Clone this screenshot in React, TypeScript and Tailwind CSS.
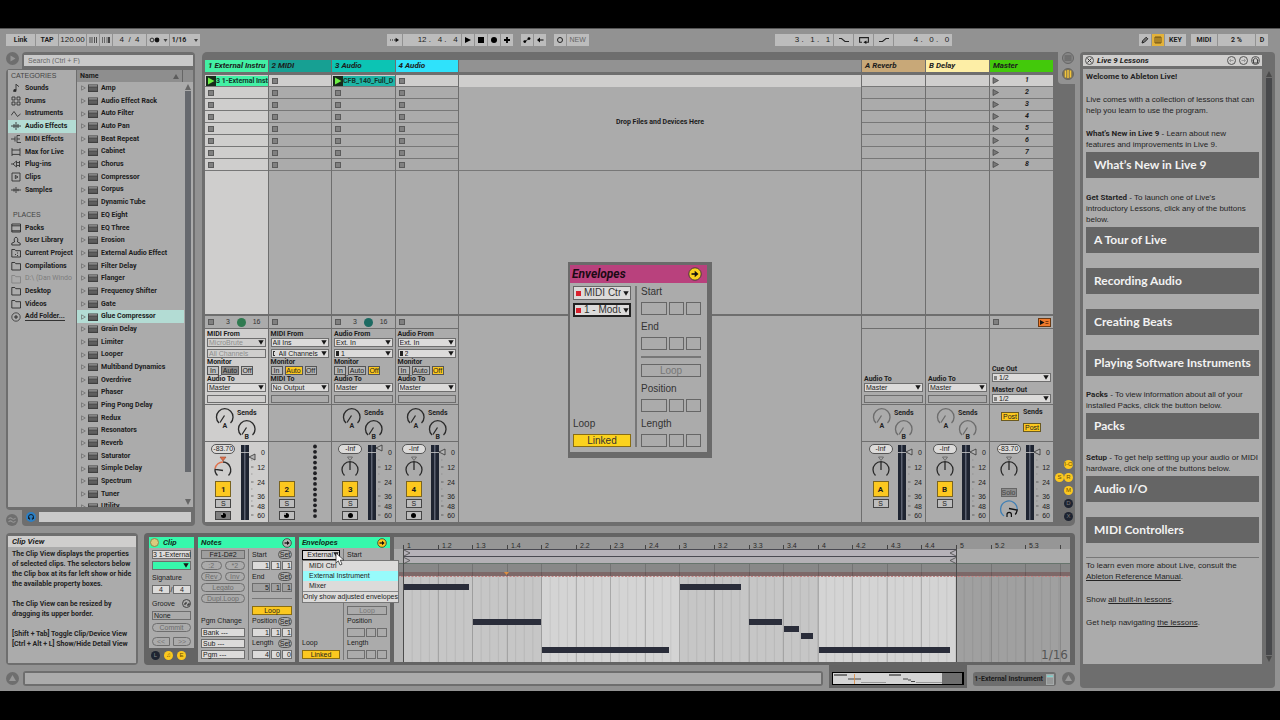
import React, { useState } from "react";
import type { ReactNode } from "react";

const BOLD = "font-['Roboto','Liberation_Sans',sans-serif] font-bold";

/* ---------- shared pieces ---------- */

function Tri({ className = "" }: { className?: string }) {
  return (
    <svg viewBox="0 0 6 5" className={`h-[5px] w-[6px] ${className}`} aria-hidden="true">
      <path d="M0.3 0.3h5.4L3 4.8z" fill="#161616" />
    </svg>
  );
}

function Choice({
  label,
  value,
  dim = false,
  mark = "none",
}: {
  label: string;
  value: string;
  dim?: boolean;
  mark?: "none" | "bar" | "block" | "square";
}) {
  const pad = mark === "none" ? "pl-px" : mark === "bar" ? "pl-[7px]" : "pl-[6px]";
  return (
    <div className="relative h-[9px] w-full">
      <select
        aria-label={label}
        className={`block h-[9px] w-full appearance-none border border-[#6e6e6e] p-0 text-[7px] leading-[7px] ${pad} ${
          dim ? "bg-[#cfcecd] text-[#8e8e8e]" : "bg-[#dcdbda] text-[#1c1c1c]"
        }`}
      >
        <option>{value}</option>
      </select>
      {mark === "bar" && <span className="absolute top-[2px] left-[2px] h-[5px] w-[2px] border border-r-0 border-[#333]" />}
      {mark === "block" && <span className="absolute top-[2px] left-[2px] h-[5px] w-[3px] bg-[#222]" />}
      {mark === "square" && <span className="absolute top-[3px] left-[2px] h-[4px] w-[3px] bg-[#808080]" />}
      {(!dim || value === "MicroBrute") && <Tri className="pointer-events-none absolute top-[2px] right-[2px]" />}
    </div>
  );
}

function IoLabel({ children }: { children: ReactNode }) {
  return <div className={`h-2 text-[7px] leading-[8px] whitespace-nowrap ${BOLD}`}>{children}</div>;
}

function StopSquare() {
  return <button aria-label="Stop clip" className="block h-[6px] w-[6px] border border-[#5b5b5b] bg-[#808080]" />;
}

/* ---------- top bar ---------- */

function Cell({ children, label, className = "" }: { children: ReactNode; label?: string; className?: string }) {
  return (
    <button
      aria-label={label}
      className={`flex h-3 items-center justify-center text-[7px] leading-[12px] whitespace-pre ${
        className.includes("bg-") ? "" : "bg-[#bcbcbc]"
      } ${className}`}
    >
      {children}
    </button>
  );
}

function TopBar() {
  return (
    <header className="flex h-[23px] justify-between pt-[5px] pr-3 pl-[6px]">
      <div className="flex gap-px">
        <Cell className={`w-[29px] ${BOLD}`}>Link</Cell>
        <Cell className={`w-[22px] ${BOLD}`}>TAP</Cell>
        <Cell className="w-[27px] text-[8px]">120.00</Cell>
        <Cell label="Nudge down" className="w-3">
          <svg viewBox="0 0 8 6" className="h-[6px] w-2">
            <path d="M1 0v6M3 0v6M5.5 0v6M7.5 0v6" stroke="#333" strokeWidth=".8" />
          </svg>
        </Cell>
        <Cell label="Nudge up" className="w-3">
          <svg viewBox="0 0 8 6" className="h-[6px] w-2">
            <path d="M.5 0v6M2.5 0v6M5 0v6" stroke="#444" strokeWidth=".7" />
            <path d="M7 0v6" stroke="#111" strokeWidth="1.4" />
          </svg>
        </Cell>
        <Cell className="w-[33px] text-[8px]">{"4  /  4"}</Cell>
        <Cell label="Metronome" className="w-[22px]">
          <svg viewBox="0 0 22 8" className="h-2 w-[22px]">
            <circle cx="5" cy="4" r="1.9" fill="none" stroke="#222" strokeWidth=".9" />
            <circle cx="10" cy="4" r="2.4" fill="#111" />
            <path d="M16.5 3h4l-2 3z" fill="#444" />
          </svg>
        </Cell>
        <Cell className={`w-[30px] gap-2 ${BOLD}`}>
          1/16
          <svg viewBox="0 0 4 3" className="h-[3px] w-1">
            <path d="M0 0h4L2 3z" fill="#444" />
          </svg>
        </Cell>
      </div>

      <div className="flex gap-2">
        <div className="flex gap-px">
          <Cell label="Follow" className="w-[15px]">
            <svg viewBox="0 0 9 6" className="h-[6px] w-[9px]">
              <path d="M0 3h1M2 3h1M4 3h3" stroke="#222" strokeWidth="1.1" />
              <path d="M5.6 .7L9 3 5.6 5.3z" fill="#111" />
            </svg>
          </Cell>
          <Cell className="w-[58px] justify-end pr-[3px] text-[8px]">{"12 .   4 .   4"}</Cell>
          <Cell label="Play" className="w-3">
            <svg viewBox="0 0 8 8" className="h-2 w-2">
              <path d="M1 1l6 3-6 3z" />
            </svg>
          </Cell>
          <Cell label="Stop" className="w-3">
            <span className="h-[6px] w-[6px] bg-black" />
          </Cell>
          <Cell label="Record" className="w-3">
            <span className="h-[6px] w-[6px] rounded-full bg-black" />
          </Cell>
          <Cell label="Overdub" className="w-3">
            <svg viewBox="0 0 8 8" className="h-2 w-2">
              <path d="M4 1v6M1 4h6" stroke="#000" strokeWidth="1.8" />
            </svg>
          </Cell>
        </div>
        <div className="flex gap-px">
          <Cell label="Automation arm" className="w-3">
            <svg viewBox="0 0 8 8" className="h-2 w-2">
              <circle cx="1.8" cy="5.6" r="1.4" />
              <circle cx="6" cy="2.6" r="1.4" />
              <path d="M1.8 5.6L6 2.6" stroke="#000" strokeWidth=".7" />
            </svg>
          </Cell>
          <Cell label="Re-enable automation" className="w-3">
            <svg viewBox="0 0 8 8" className="h-2 w-2">
              <path d="M4 1.6L1 4l3 2.4z" />
              <path d="M3 4h4.5" stroke="#111" strokeWidth="1.1" />
            </svg>
          </Cell>
        </div>
        <div className="flex gap-px">
          <Cell label="Session record" className="w-3">
            <span className="h-[6px] w-[6px] rounded-full border border-[#222]" />
          </Cell>
          <Cell className="w-[22px] text-[#666]">NEW</Cell>
        </div>
      </div>

      <div className="flex gap-px">
        <Cell className="w-[58px] justify-end pr-[3px] text-[8px]">{"3 .   1 .   1"}</Cell>
        <Cell label="Punch in" className="w-[19px]">
          <svg viewBox="0 0 12 8" className="h-2 w-3">
            <path d="M1 2.5h2.5L7 5.5h4" fill="none" stroke="#222" strokeWidth="1.1" />
          </svg>
        </Cell>
        <Cell label="Loop" className="w-[19px]">
          <svg viewBox="0 0 12 8" className="h-2 w-3">
            <path d="M4 6.3H1.6V1.6h8.8v4.7H8" fill="none" stroke="#222" strokeWidth="1.1" />
            <path d="M8.4 4.4v3.6L5.4 6.2z" fill="#111" />
          </svg>
        </Cell>
        <Cell label="Punch out" className="w-[19px]">
          <svg viewBox="0 0 12 8" className="h-2 w-3">
            <path d="M1 5.5h3.5L8 2.5h3" fill="none" stroke="#222" strokeWidth="1.1" />
          </svg>
        </Cell>
        <Cell className="w-[58px] justify-end pr-[3px] text-[8px]">{"4 .   0 .   0"}</Cell>
      </div>

      <div className="flex gap-px">
        <Cell label="Draw mode" className="w-3">
          <svg viewBox="0 0 8 8" className="h-2 w-2">
            <path d="M1 7l.7-2.3L5.2 1.2 6.8 2.8 3.3 6.3z" fill="#777" stroke="#222" />
          </svg>
        </Cell>
        <Cell label="Computer MIDI keyboard" className="w-3 bg-[#e3b23a]">
          <svg viewBox="0 0 8 8" className="h-2 w-2">
            <path d="M1 1h6v6H1zM3 1v6M5 1v6" fill="none" stroke="#553e0c" strokeWidth=".8" />
          </svg>
        </Cell>
        <Cell className={`w-[21px] ${BOLD}`}>KEY</Cell>
        <span className="w-[3px]" />
        <Cell className={`w-[26px] ${BOLD}`}>MIDI</Cell>
        <Cell className={`w-[37px] ${BOLD}`}>2 %</Cell>
        <Cell className={`w-3 ${BOLD}`}>D</Cell>
      </div>
    </header>
  );
}

/* ---------- browser ---------- */

const CATEGORY_PATHS: Record<string, string> = {
  Sounds: "M5 1v6M5 1.3l3 2.4M3 6.6h2v1.8H2.6z",
  Drums: "M1 1h3v3H1zM6 1h3v3H6zM1 6h3v3H1zM6 6h3v3H6z",
  Instruments: "M0 6.5l3-4 3.5 5L9.5 5",
  "Audio Effects": "M0 5h10M3 3v4M5 1v8M7 3v4",
  "MIDI Effects": "M0 5h4M4 2.5v5M9 1.5H6v7h4M6 5h3",
  "Max for Live": "M1 3h8v4.4H1zM1 1.2V3M9 1.2V3M1 7.4V9M9 7.4V9",
  "Plug-ins": "M0 5h2M5.5 2L2 5l3.5 3zM6 3.5h3M6 6.5h3M8.5 2v6",
  Clips: "M1 1h8v8H1zM4.3 3.4L7 5 4.3 6.6z",
  Samples: "M0 5h10M3 3.4v3.2M5 2v6M7 3.8v2.4",
};

const PLACES = ["Packs", "User Library", "Current Project", "Compilations", "D:\\ (Dan Windo", "Desktop", "Videos"];

const DEVICES = [
  "Amp", "Audio Effect Rack", "Auto Filter", "Auto Pan", "Beat Repeat", "Cabinet", "Chorus", "Compressor", "Corpus",
  "Dynamic Tube", "EQ Eight", "EQ Three", "Erosion", "External Audio Effect", "Filter Delay", "Flanger",
  "Frequency Shifter", "Gate", "Glue Compressor", "Grain Delay", "Limiter", "Looper", "Multiband Dynamics",
  "Overdrive", "Phaser", "Ping Pong Delay", "Redux", "Resonators", "Reverb", "Saturator", "Simple Delay",
  "Spectrum", "Tuner", "Utility",
];

function placePath(name: string) {
  if (name === "Packs") return "M.8 1h8.700v8H.8zM.8 2.800h8.700M.8 7.800h8.700";
  if (name === "User Library") return "M3.500 6c-1.800-6.300 4.800-6.300 3 0l2.700 1.200V9H.8V7.200z";
  if (name === "Current Project") return "M.8 9V1.500h3l1 1.200h4.700V9zM4 6.500h1M6 5h1M6 7.500h1";
  return "M.8 9V1.500h3l1 1.200h4.700V9z";
}

function Browser() {
  const [category, setCategory] = useState("Audio Effects");
  return (
    <section aria-label="Browser" className="flex w-[189px] flex-col">
      <div className="flex">
        <div className="w-4">
          <button aria-label="Preview" className="block h-[13px] w-[13px] rounded-full bg-[#6e6e6e]">
            <svg viewBox="0 0 13 13" className="h-[13px] w-[13px]">
              <path d="M4.500 3.500v6l5-3z" fill="#969696" />
            </svg>
          </button>
        </div>
        <div className="flex-1 rounded-t-[4px] bg-[#6e6e6e] px-[2px] pt-[3px] pb-[3px]">
          <input
            aria-label="Search"
            placeholder="Search (Ctrl + F)"
            className="block h-[11px] w-full bg-[#c9c9c9] px-1 text-[7px] placeholder:text-[#666]"
          />
        </div>
      </div>

      <div className="flex h-0 min-h-0 grow gap-px rounded-tl-[4px] rounded-bl-[4px] bg-[#6e6e6e] p-[2px] pt-px pb-[3px]">
        <nav className="w-[68px] overflow-hidden bg-[#ababab]">
          <h2 className="h-3 pl-[3px] text-[7px] leading-[12px] text-[#444]">CATEGORIES</h2>
          <ul className={`grid h-[241px] grid-rows-[repeat(19,1fr)] text-[7px] text-[#1c1c1c] ${BOLD}`}>
            {Object.entries(CATEGORY_PATHS).map(([name, d]) => (
              <li key={name} className="min-h-0">
                <button
                  onClick={() => setCategory(name)}
                  className={`flex h-full w-full items-center gap-1 pl-[3px] whitespace-nowrap ${
                    category === name ? "bg-[#b3dcd4]" : ""
                  }`}
                >
                  <svg viewBox="0 0 10 10" className="h-[10px] w-[10px] shrink-0">
                    <path d={d} fill={name === "Sounds" ? "#222" : "none"} stroke="#333" strokeWidth=".9" />
                  </svg>
                  {name}
                </button>
              </li>
            ))}
            <li />
            <li className="flex items-center pl-[5px] font-['Liberation_Sans',sans-serif] font-normal text-[#444]">PLACES</li>
            {PLACES.map((name) => (
              <li key={name} className={`min-h-0 ${name.startsWith("D:") ? "font-normal text-[#7d7d7d]" : ""}`}>
                <button className="flex h-full w-full items-center gap-1 pl-[3px] whitespace-nowrap">
                  <svg viewBox="0 0 10 10" className="h-[10px] w-[10px] shrink-0">
                    <path d={placePath(name)} fill="none" stroke="currentColor" strokeWidth=".8" />
                  </svg>
                  {name}
                </button>
              </li>
            ))}
            <li className="min-h-0">
              <button className="flex h-full w-full items-center gap-1 pl-[3px] whitespace-nowrap">
                <svg viewBox="0 0 10 10" className="h-[10px] w-[10px] shrink-0">
                  <circle cx="5" cy="5" r="4.200" fill="none" stroke="#333" strokeWidth=".8" />
                  <path d="M5 3v4M3 5h4" stroke="#222" strokeWidth=".9" />
                </svg>
                <span className="border-b border-[#333] leading-[8px]">Add Folder...</span>
              </button>
            </li>
          </ul>
        </nav>

        <div className="flex min-w-0 flex-1 flex-col overflow-hidden bg-[#ababab]">
          <div className={`flex h-3 shrink-0 items-center bg-[#8e8e8e] pl-[3px] text-[7px] ${BOLD}`}>
            <span className="flex-1">Name</span>
            <svg viewBox="0 0 6 5" className="mr-[3px] h-[5px] w-[6px]">
              <path d="M3 0l3 5H0z" fill="#5c5c5c" />
            </svg>
            <span className="h-3 w-[11px] border-l border-[#666]" />
          </div>
          <div className="flex min-h-0 flex-1">
            <ul className={`grid h-[431px] flex-1 grid-rows-[repeat(34,1fr)] text-[7px] text-[#1c1c1c] ${BOLD}`}>
              {DEVICES.map((name) => (
                <li
                  key={name}
                  className={`flex min-h-0 items-center pl-1 whitespace-nowrap ${name === "Glue Compressor" ? "bg-[#b3dcd4]" : ""}`}
                >
                  <svg viewBox="0 0 5 6" className="h-[6px] w-[5px]">
                    <path d="M.5 .8L4.300 3 .5 5.200z" fill="none" stroke="#6a6a6a" strokeWidth=".7" />
                  </svg>
                  <svg viewBox="0 0 10 8" className="mr-[3px] ml-[2px] h-2 w-[10px]">
                    <path d="M0 .5h10v7.500H0z" fill="#3f3f3f" />
                    <path d="M.8 1.300h8.400v1.200H.8z" fill="#a2a2a2" />
                    <path d="M.8 3.400h8.400v3.400H.8z" fill="#5e5e5e" />
                  </svg>
                  {name}
                </li>
              ))}
            </ul>
            <div className="flex w-[9px] flex-col items-center py-[2px] pr-px">
              <svg viewBox="0 0 6 6" className="h-[6px] w-[6px]">
                <path d="M3 0l3 6H0z" fill="#666" />
              </svg>
              <div className="mt-px mb-[27px] w-[6px] flex-1 bg-[#66696e]" />
              <svg viewBox="0 0 6 6" className="h-[6px] w-[6px]">
                <path d="M3 6l3-6H0z" fill="#666" />
              </svg>
            </div>
          </div>
        </div>
      </div>

      <div className="flex">
        <div className="w-4 pt-[4px]">
          <button aria-label="Groove pool" className="block h-[12px] w-[12px] rounded-full bg-[#6e6e6e]">
            <svg viewBox="0 0 12 12" className="h-3 w-3">
              <path d="M2.500 5q1.700-2 3.500-.4t3.500-.6M2.500 8q1.700-2 3.500-.4t3.500-.6" fill="none" stroke="#969696" strokeWidth="1.100" />
            </svg>
          </button>
        </div>
        <div className="flex flex-1 items-center gap-[3px] rounded-b-[4px] bg-[#6e6e6e] pt-px pr-[4px] pb-[3px] pl-[4px]">
          <button aria-label="Preview files" className="h-[10px] w-[10px] rounded-full bg-[#2b7fc4]">
            <svg viewBox="0 0 10 10" className="h-[10px] w-[10px]">
              <path d="M2.500 7V5a2.500 2.500 0 015 0v2M3.600 5.500v2.200M6.400 5.500v2.200" fill="none" stroke="#10202e" />
            </svg>
          </button>
          <div className="h-[10px] flex-1 bg-[#c9c9c9]" />
        </div>
      </div>
    </section>
  );
}

/* ---------- mixer drawings ---------- */

function Sends({ dim = false }: { dim?: boolean }) {
  const stroke = dim ? "#6c6c6c" : "#2a2a2a";
  return (
    <svg viewBox="0 0 62 36" className="h-9 w-[62px]" aria-label="Sends A and B" role="img">
      <g fill="none" stroke={stroke} strokeWidth="1.300">
        <path d="M14 18A8.300 8.300 0 1 1 25.500 18M19.500 10.500l-4.500 7" />
        <path d="M36 30A8.300 8.300 0 1 1 47.500 30M41.500 22.500l-4.500 7" />
      </g>
      <g fill="#222" className={BOLD} fontSize="7">
        <text x="17.500" y="22.500">A</text>
        <text x="39.500" y="34">B</text>
        <text x="32" y="9.500">Sends</text>
      </g>
    </svg>
  );
}

const SCALE: [string, number][] = [["0", 10], ["12", 25], ["24", 40], ["36", 54], ["48", 64], ["60", 73]];

function Meter({ marker }: { marker: number }) {
  return (
    <svg viewBox="0 0 26 80" className="h-20 w-[26px] shrink-0" role="img" aria-label="Level meter">
      <rect x="1" y="3" width="8" height="75" fill="#5b6170" />
      <rect x="1" y="3" width="3" height="75" fill="#1e2431" />
      <rect x="5.500" y="3" width="3.500" height="75" fill="#1e2431" />
      <path d="M1 10.500h8" stroke="#ccc" strokeWidth=".8" />
      <path d={`M15 ${marker - 3}v6l-6-3z`} fill="#b5b5b5" stroke="#333" strokeWidth=".8" />
      <g stroke="#888" strokeWidth=".7">
        {SCALE.slice(1).map(([t, y]) => (
          <path key={t} d={`M11 ${y}h2.500`} stroke="#444" />
        ))}
        <path d="M11 18h1.500M11 32h1.500M11 47h1.500M11 59h1.500" />
      </g>
      <g fontSize="7" fill="#222" textAnchor="end">
        {SCALE.map(([t, y]) => (
          <text key={t} x="25" y={y + 2.500}>{t}</text>
        ))}
      </g>
    </svg>
  );
}

function PanKnob({ left = false }: { left?: boolean }) {
  return (
    <svg viewBox="0 0 22 26" className="h-[26px] w-[22px]" role="img" aria-label="Pan">
      {left ? (
        <>
          <path d="M5.500 20.500A8 8 0 0 1 3.100 13.500M11 7a8 8 0 0 1 5.500 13.500M11 15.500l-7.500-1.200" fill="none" stroke="#2a2a2a" strokeWidth="1.300" />
          <path d="M3.100 13.500A8 8 0 0 1 11 7" fill="none" stroke="#e0704a" strokeWidth="1.400" />
          <path d="M8 2h6l-3 4z" fill="#e0704a" stroke="#9a4a30" strokeWidth=".6" />
        </>
      ) : (
        <>
          <path d="M5.500 20.500A8 8 0 1 1 16.500 20.500M11 15V7" fill="none" stroke="#2a2a2a" strokeWidth="1.300" />
          <path d="M8.500 2h5L11 5.500z" fill="none" stroke="#555" strokeWidth=".7" />
        </>
      )}
    </svg>
  );
}

function Mixer({ name, level, marker, armed, dimArm = false, midi = false }: { name: string; level: string; marker: number; armed: boolean; dimArm?: boolean; midi?: boolean }) {
  return (
    <div className="flex h-20 pr-[2px]">
      <div className="flex w-9 flex-col items-center pt-[2px] pl-[2px]">
        {midi ? (
          <div className="h-[37px] shrink-0" />
        ) : (
          <>
            <div className="flex h-[10px] w-[24px] shrink-0 items-center justify-center rounded-full border border-[#555] bg-[#dcdbda] text-[7px] leading-[8px]">
              {level}
            </div>
            <div className="h-[27px] shrink-0 pt-px">
              <PanKnob left={level.startsWith("-8")} />
            </div>
          </>
        )}
        <button className={`h-4 w-4 shrink-0 border border-[#7a6420] bg-[#fcc81f] text-[8px] leading-[13px] ${BOLD}`}>{name}</button>
        <button className="mt-[2px] h-[9px] w-4 shrink-0 border border-[#444] bg-[#bdbdbd] text-[7px] leading-[7px]">S</button>
        {armed && (
          <button
            aria-label={`Arm ${name}`}
            className={`mt-[3px] flex h-[9px] w-4 shrink-0 items-center justify-center border border-[#444] ${dimArm ? "bg-[#808080]" : "bg-[#bdbdbd]"}`}
          >
            <span className="flex h-[5px] w-[5px] items-start justify-start rounded-full bg-black">
              {(midi || dimArm) && <span className="h-[2px] w-[2px] bg-[#999]" />}
            </span>
          </button>
        )}
      </div>
      {midi ? (
        <svg viewBox="0 0 26 80" className="h-20 w-[26px] shrink-0" role="img" aria-label="MIDI activity">
          {Array.from({ length: 14 }, (_, i) => (
            <circle key={i} cx="12" cy={4.5 + i * 5.35} r="1.900" fill="#1e1e22" />
          ))}
        </svg>
      ) : (
        <Meter marker={marker} />
      )}
    </div>
  );
}

/* ---------- session view ---------- */

type Track = {
  title: string;
  head: string;
  clip?: string;
  clipColor?: string;
  from: string;
  source: string;
  channel: string;
  mark: "none" | "bar" | "block";
  to: string;
  out: string;
  monitor: string;
  count: string;
  name: string;
};

const TRACKS: Track[] = [
  { title: "1 External Instru", head: "bg-[#43f0a4]", clip: "3 1-External Inst", clipColor: "bg-[#43f0a4]", from: "MIDI From", source: "MicroBrute", channel: "All Channels", mark: "none", to: "Audio To", out: "Master", monitor: "", count: "bg-[#2f7a50]", name: "1" },
  { title: "2 MIDI", head: "bg-[#17a093]", from: "MIDI From", source: "All Ins", channel: "All Channels", mark: "bar", to: "MIDI To", out: "No Output", monitor: "Auto", count: "", name: "2" },
  { title: "3 Audio", head: "bg-[#0cc4b4]", clip: "CFB_140_Full_D", clipColor: "bg-[#1fb5a6]", from: "Audio From", source: "Ext. In", channel: "1", mark: "block", to: "Audio To", out: "Master", monitor: "Off", count: "bg-[#1d6a62]", name: "3" },
  { title: "4 Audio", head: "bg-[#2fe2fb]", from: "Audio From", source: "Ext. In", channel: "2", mark: "block", to: "Audio To", out: "Master", monitor: "Off", count: "", name: "4" },
];

const ROWS = [1, 2, 3, 4, 5, 6, 7, 8];
const TITLE = `h-3 shrink-0 overflow-hidden pl-[3px] text-[8px] leading-[12px] whitespace-nowrap italic ${BOLD}`;

function TrackColumn({ track, selected }: { track: Track; selected: boolean }) {
  const base = selected ? "bg-[#cfcecd]" : "bg-[#ababab]";
  const monitorWidths: Record<string, string> = { In: "w-3", Auto: "w-[18px]", Off: "w-3" };
  return (
    <div className="flex min-w-0 flex-col">
      <div className={`${TITLE} ${track.head}`}>{track.title}</div>
      <div className="mt-[3px]">
        {ROWS.map((row) => (
          <div
            key={row}
            className={`flex h-3 items-center border-b border-[#777] ${row === 1 ? "bg-[#cfcecd]" : base} ${row === 1 && track.clip ? "pl-px" : "pl-[3px]"}`}
          >
            {row === 1 && track.clip ? (
              <div className={`flex h-[10px] w-full overflow-hidden ${track.clipColor}`}>
                <button aria-label="Launch clip" className="h-[10px] w-[10px] shrink-0 bg-[#172a1c]">
                  <svg viewBox="0 0 10 10" className="h-[10px] w-[10px]">
                    <path d="M2 1.500l6.500 3.500L2 8.500z" fill="#6df043" />
                  </svg>
                </button>
                <span className={`text-[7px] leading-[10px] whitespace-nowrap text-[#12352c] ${BOLD}`}>{track.clip}</span>
              </div>
            ) : (
              <StopSquare />
            )}
          </div>
        ))}
      </div>
      <div className={`flex-1 ${base}`} />
      <div className="mt-[2px] flex h-3 items-center bg-[#ababab] pr-[7px] pl-[3px] text-[7px] text-[#333]">
        <StopSquare />
        {track.count && (
          <>
            <span className="ml-3">3</span>
            <span className={`ml-[7px] h-[9px] w-[9px] rounded-full ${track.count}`} />
            <span className="ml-auto">16</span>
          </>
        )}
      </div>
      <div className={`mt-px flex h-[75px] flex-col px-[2px] pt-px ${base}`}>
        <IoLabel>{track.from}</IoLabel>
        <Choice label={`${track.title} input`} value={track.source} dim={selected} />
        <div className="h-[2px]" />
        <Choice label={`${track.title} input channel`} value={track.channel} dim={selected} mark={track.mark} />
        <IoLabel>Monitor</IoLabel>
        <div className="flex gap-[2px]">
          {["In", "Auto", "Off"].map((m) => (
            <button
              key={m}
              className={`h-[9px] border border-[#555] text-[7px] leading-[7px] ${monitorWidths[m]} ${
                track.monitor === m ? "bg-[#fcc81f]" : selected && m === "Auto" ? "bg-[#8c8c8c]" : selected ? "bg-[#c0c0c0]" : "bg-[#b6b6b6]"
              }`}
            >
              {m}
            </button>
          ))}
        </div>
        <IoLabel>{track.to}</IoLabel>
        <Choice label={`${track.title} output`} value={track.out} />
        <div className={`mt-[3px] h-2 border border-[#6e6e6e] ${base}`} />
      </div>
      <div className={`mt-px h-9 ${base}`}>{track.name !== "2" && <Sends />}</div>
      <div className={`mt-px ${base}`}>
        <Mixer
          name={track.name}
          level={track.name === "1" ? "-83.70" : "-Inf"}
          marker={track.name === "1" ? 15 : track.name === "3" ? 6 : 10}
          armed
          dimArm={selected}
          midi={track.name === "2"}
        />
      </div>
    </div>
  );
}

function ReturnColumn({ title, head, name }: { title: string; head: string; name: string }) {
  return (
    <div className="flex min-w-0 flex-col">
      <div className={`${TITLE} ${head}`}>{title}</div>
      <div className="mt-[3px]">
        {ROWS.map((row) => (
          <div key={row} className={`h-3 border-b border-[#777] ${row === 1 ? "bg-[#cfcecd]" : "bg-[#ababab]"}`} />
        ))}
      </div>
      <div className="flex-1 bg-[#ababab]" />
      <div className="mt-[2px] h-3 bg-[#ababab]" />
      <div className="mt-px flex h-[75px] flex-col justify-end bg-[#ababab] px-[2px] pb-px">
        <IoLabel>Audio To</IoLabel>
        <Choice label={`${title} output`} value="Master" />
        <div className="mt-[3px] h-2 border border-[#6e6e6e]" />
      </div>
      <div className="mt-px h-9 bg-[#ababab]">
        <Sends dim />
      </div>
      <div className="mt-px bg-[#ababab]">
        <Mixer name={name} level="-Inf" marker={10} armed={false} />
      </div>
    </div>
  );
}

function MasterColumn() {
  return (
    <div className="flex w-[63px] flex-col">
      <div className={`${TITLE} bg-[#43c90b]`}>Master</div>
      <div className="mt-[3px]">
        {ROWS.map((row) => (
          <div key={row} className={`flex h-3 items-center border-b border-[#777] pl-[2px] ${row === 1 ? "bg-[#cfcecd]" : "bg-[#ababab]"}`}>
            <button aria-label={`Launch scene ${row}`} className="w-[7px]">
              <svg viewBox="0 0 7 7" className="h-[7px] w-[7px]">
                <path d="M1 .5l5.500 3L1 6.500z" fill="#777" stroke="#444" strokeWidth=".7" />
              </svg>
            </button>
            <span className={`ml-[26px] text-[7px] italic ${BOLD}`}>{row}</span>
          </div>
        ))}
      </div>
      <div className="flex-1 bg-[#ababab]" />
      <div className="mt-[2px] flex h-3 items-center justify-between bg-[#ababab] pr-[2px] pl-[3px]">
        <StopSquare />
        <button aria-label="Back to arrangement" className="h-[9px] w-[13px] border border-[#6b3a14] bg-[#ee7a2c]">
          <svg viewBox="0 0 11 7" className="h-[7px] w-[11px]">
            <path d="M1 1l4.500 2.500L1 6z" fill="#111" />
            <path d="M6.500 2.500h3M6.500 4.500h3" stroke="#7b3a10" />
          </svg>
        </button>
      </div>
      <div className="mt-px flex h-[75px] flex-col justify-end bg-[#ababab] px-[2px] pb-px">
        <IoLabel>Cue Out</IoLabel>
        <Choice label="Cue output" value="1/2" mark="square" />
        <div className="h-[4px]" />
        <IoLabel>Master Out</IoLabel>
        <Choice label="Master output" value="1/2" mark="square" />
      </div>
      <div className="mt-px flex h-9 flex-col bg-[#ababab] pt-[3px]">
        <div className="flex items-start gap-1 pl-[11px]">
          <button className="mt-[4px] h-[9px] w-[18px] border border-[#6b5a20] bg-[#fcc81f] text-[7px] leading-[7px]">Post</button>
          <span className={`text-[7px] leading-[8px] ${BOLD}`}>Sends</span>
        </div>
        <button className="mt-[2px] ml-[33px] h-[9px] w-[18px] border border-[#6b5a20] bg-[#fcc81f] text-[7px] leading-[7px]">Post</button>
      </div>
      <div className="mt-px flex h-20 bg-[#ababab] pr-[2px]">
        <div className="flex w-[37px] flex-col items-center pt-[2px] pl-[2px]">
          <div className="flex h-[10px] w-[24px] shrink-0 items-center justify-center rounded-full border border-[#555] bg-[#dcdbda] text-[7px] leading-[8px]">
            -83.70
          </div>
          <div className="h-[27px] shrink-0 pt-px">
            <PanKnob />
          </div>
          <button className="mt-[7px] h-[9px] w-4 shrink-0 border border-[#666] bg-[#8c8c8c] text-[7px] leading-[7px] text-[#444]">Solo</button>
          <svg viewBox="0 0 22 22" className="h-[22px] w-[22px] shrink-0" role="img" aria-label="Cue volume">
            <path d="M6 19A8.300 8.300 0 1 1 19.200 13" fill="none" stroke="#3f7fb5" strokeWidth="1.300" />
            <path d="M11 11.500l8.200 1.500a8.300 8.300 0 0 1-2 4.500" fill="none" stroke="#111" strokeWidth="1.300" />
            <path d="M9 20v-2.500a2.200 2.200 0 014.400 0V20" fill="none" stroke="#111" strokeWidth="1.200" />
          </svg>
        </div>
        <Meter marker={10} />
      </div>
    </div>
  );
}

function Round({ children, tone = "bg-[#fcc81f] text-[#6b4d00]" }: { children: ReactNode; tone?: string }) {
  return <button className={`h-[9px] w-[9px] rounded-full text-[6px] leading-[9px] ${tone}`}>{children}</button>;
}

function Session() {
  return (
    <section aria-label="Session view" className="flex min-w-0 flex-1 rounded-[5px] bg-[#6e6e6e]">
      <div className="flex min-w-0 flex-1 pt-2 pb-1 pl-[3px]">
        <div className="grid w-[253px] shrink-0 grid-cols-4 gap-px">
          {TRACKS.map((t, i) => (
            <TrackColumn key={t.title} track={t} selected={i === 0} />
          ))}
        </div>
        <div className="ml-px flex min-w-0 flex-1 flex-col">
          <div className="h-3 bg-[#929292]" />
          <div className="mt-[3px] h-3 bg-[#cfcecd]" />
          <div className={`h-[84px] border-b border-[#777] bg-[#ababab] pt-[31px] text-center text-[7px] leading-[8px] ${BOLD}`}>
            Drop Files and Devices Here
          </div>
          <div className="flex-1 bg-[#ababab]" />
          <div className="mt-[2px] h-[206px] bg-[#ababab]" />
        </div>
        <div className="ml-px grid w-[127px] shrink-0 grid-cols-2 gap-px">
          <ReturnColumn title="A Reverb" head="bg-[#c8a878]" name="A" />
          <ReturnColumn title="B Delay" head="bg-[#fdeea6]" name="B" />
        </div>
        <div className="ml-px flex shrink-0">
          <MasterColumn />
        </div>
      </div>
      <div className="ml-[5px] flex w-[17px] shrink-0 flex-col">
        <div className="flex h-8 flex-col items-end gap-1 rounded-bl-[4px] bg-[#929292] pr-px">
          <button aria-label="Arrangement view" className="h-3 w-3 rounded-full border border-[#666] bg-[#858585]">
            <svg viewBox="0 0 10 10" className="h-[10px] w-[10px]">
              <path d="M1.500 3h7M1.500 5h7M1.500 7h7" stroke="#5a5a5a" />
            </svg>
          </button>
          <button aria-label="Session view" className="h-3 w-3 rounded-full border border-[#666] bg-[#7c7152]">
            <svg viewBox="0 0 10 10" className="h-[10px] w-[10px]">
              <path d="M2.500 1.500v7M5 1v8M7.500 1.500v7" stroke="#f3c53a" strokeWidth="1.500" />
            </svg>
          </button>
        </div>
        <div className="mt-auto mb-[5px] flex flex-col items-end gap-1 pr-[2px]">
          <Round>I-O</Round>
          <div className="flex">
            <Round>S</Round>
            <Round>R</Round>
          </div>
          <Round>M</Round>
          <Round tone="bg-[#1e2431] text-[#777]">D</Round>
          <Round tone="bg-[#1e2431] text-[#777]">X</Round>
        </div>
      </div>
    </section>
  );
}

/* ---------- clip detail ---------- */

const NUM = "h-[9px] min-w-0 border border-[#6e6e6e] text-right text-[7px] leading-[7px]";
const PILL = "h-[9px] rounded-full border border-[#6e6e6e] text-[7px] leading-[7px] text-[#6b6b6b]";

function BoxTitle({ children, icon }: { children: ReactNode; icon?: ReactNode }) {
  return (
    <h3 className={`flex h-[11px] shrink-0 items-center justify-between bg-[#37f8ac] px-[3px] text-[8px] leading-[11px] italic text-[#12301f] ${BOLD}`}>
      {children}
      {icon}
    </h3>
  );
}

function ArrowDot({ lit = false }: { lit?: boolean }) {
  return (
    <svg viewBox="0 0 10 10" className="h-[10px] w-[10px]">
      <circle cx="5" cy="5" r="4.300" fill={lit ? "#fcc81f" : "#b4b4b4"} stroke="#333" strokeWidth=".8" />
      <path d="M2.500 5h3" stroke="#111" strokeWidth="1.300" />
      <path d="M5 2.700L7.600 5 5 7.300z" fill="#111" />
    </svg>
  );
}

function Triple({ values, dim = false }: { values: string[]; dim?: boolean }) {
  return (
    <div className="grid w-full grid-cols-[18px_1fr_1fr] gap-px">
      {values.map((v, i) => (
        <div key={i} className={`${NUM} ${dim ? "bg-[#a0a0a0]" : "bg-[#dcdbda]"}`}>{v}</div>
      ))}
    </div>
  );
}

function SetRow({ children }: { children: ReactNode }) {
  return (
    <div className="flex w-full items-center justify-between text-[7px] leading-[8px]">
      {children}
      <button className="h-[9px] w-[14px] rounded-full border border-[#555] text-[7px] leading-[7px]">Set</button>
    </div>
  );
}

function ClipBox() {
  return (
    <div className="flex w-[45px] flex-col">
      <div className="flex h-[111px] flex-col bg-[#ababab] text-[7px] leading-[8px]">
        <h3 className={`flex h-[11px] items-center gap-[4px] bg-[#37f8ac] pl-px text-[8px] italic text-[#12301f] ${BOLD}`}>
          <span className="h-[9px] w-[9px] rounded-full border border-[#8d8650] bg-[#d9cb7d]" />
          Clip
        </h3>
        <div className="flex flex-col px-[3px] pt-[2px]">
          <div className="h-[9px] border border-[#6e6e6e] bg-[#dcdbda] leading-[7px] whitespace-nowrap">3 1-External</div>
          <button aria-label="Clip colour" className="mt-[2px] flex h-[9px] items-center justify-end border border-[#6e6e6e] bg-[#37f8ac] pr-px">
            <Tri />
          </button>
          <div className="mt-1">Signature</div>
          <div className="mt-[3px] flex items-center justify-between">
            <span className="h-[9px] w-[18px] border border-[#6e6e6e] bg-[#dcdbda] text-center leading-[7px]">4</span>/
            <span className="h-[9px] w-[18px] border border-[#6e6e6e] bg-[#dcdbda] text-center leading-[7px]">4</span>
          </div>
          <div className="mt-[5px] flex items-center justify-between">
            Groove
            <span className="flex h-[9px] w-[9px] items-center justify-center rounded-full border border-[#444]">
              <svg viewBox="0 0 6 6" className="h-[6px] w-[6px]">
                <path d="M1 4V2h2M5 2v2H3" fill="none" stroke="#222" />
              </svg>
            </span>
          </div>
          <div className="mt-[3px] h-[9px] border border-[#6e6e6e] pl-px leading-[7px]">None</div>
          <button className={`mt-[3px] ${PILL}`}>Commit</button>
          <div className="mt-[5px] grid grid-cols-2 gap-[3px]">
            <button className="h-[9px] rounded-l-full border border-[#6e6e6e] leading-[7px] text-[#777]">&lt;&lt;</button>
            <button className="h-[9px] rounded-r-full border border-[#6e6e6e] leading-[7px] text-[#777]">&gt;&gt;</button>
          </div>
        </div>
      </div>
      <div className="mt-[3px] flex gap-[4px] pl-[2px]">
        <Round tone="bg-[#1e2431] text-[#888]">L</Round>
        <Round>♫</Round>
        <Round>E</Round>
      </div>
    </div>
  );
}

function NotesBox() {
  return (
    <div className="flex w-[97px] flex-col bg-[#ababab]">
      <BoxTitle icon={<ArrowDot />}>Notes</BoxTitle>
      <div className="flex flex-1 pt-px pr-[3px] pb-[2px] pl-[3px]">
        <div className="grid w-[44px] grid-rows-[repeat(10,1fr)] items-center text-[7px] leading-[8px]">
          <div className="h-[9px] border border-[#6e6e6e] bg-[#9e9e9e] text-center leading-[7px]">F#1-D#2</div>
          <div className="grid grid-cols-2 gap-[3px]">
            <button className={PILL}>:2</button>
            <button className={PILL}>*2</button>
          </div>
          <div className="grid grid-cols-2 gap-[3px]">
            <button className={PILL}>Rev</button>
            <button className={PILL}>Inv</button>
          </div>
          <button className={PILL}>Legato</button>
          <button className={PILL}>Dupl.Loop</button>
          <span />
          <span className="whitespace-nowrap">Pgm Change</span>
          {["Bank ---", "Sub ---", "Pgm ---"].map((t) => (
            <div key={t} className="h-[9px] border border-[#6e6e6e] bg-[#dcdbda] pl-px leading-[7px]">{t}</div>
          ))}
        </div>
        <div className="mx-[3px] w-px bg-[#777]" />
        <div className="grid flex-1 grid-rows-[repeat(10,1fr)] items-center text-[7px]">
          <SetRow>Start</SetRow>
          <Triple values={["1", "1", "1"]} />
          <SetRow>End</SetRow>
          <Triple values={["5", "1", "1"]} dim />
          <div className="h-px bg-[#777]" />
          <button className="h-[9px] border border-[#8a6d10] bg-[#fcc81f] text-[7px] leading-[7px]">Loop</button>
          <SetRow>Position</SetRow>
          <Triple values={["1", "1", "1"]} />
          <SetRow>Length</SetRow>
          <Triple values={["4", "0", "0"]} />
        </div>
      </div>
    </div>
  );
}

function Blank3() {
  return (
    <div className="grid grid-cols-[18px_1fr_1fr] gap-px">
      <div className={NUM} />
      <div className={NUM} />
      <div className={NUM} />
    </div>
  );
}

function EnvelopeBox() {
  return (
    <div className="relative flex w-[91px] flex-col bg-[#ababab]">
      <BoxTitle icon={<ArrowDot lit />}>Envelopes</BoxTitle>
      <div className="flex flex-1 pt-px pr-[3px] pb-[2px] pl-[3px]">
        <div className="grid w-[38px] grid-rows-[repeat(10,1fr)] items-center text-[7px] leading-[8px]">
          <button className="flex h-[10px] items-center justify-end border border-black bg-[#dcdbda] leading-[8px]">
            External
            <Tri />
          </button>
          <span className="row-start-9">Loop</span>
          <button className="row-start-10 h-[9px] border border-[#8a6d10] bg-[#fcc81f] leading-[7px]">Linked</button>
        </div>
        <div className="mx-[3px] w-px bg-[#777]" />
        <div className="grid flex-1 grid-rows-[repeat(10,1fr)] items-center text-[7px] leading-[8px]">
          <span>Start</span>
          <Blank3 />
          <span />
          <Blank3 />
          <span />
          <button className="h-[9px] border border-[#6e6e6e] leading-[7px] text-[#777]">Loop</button>
          <span>Position</span>
          <Blank3 />
          <span>Length</span>
          <Blank3 />
        </div>
      </div>
      <div className="absolute top-[23px] left-[3px] z-10 border border-[#777] bg-[#dcdbda] text-[7px] leading-[10px] whitespace-nowrap text-[#222]">
        <ul>
          <li className="pl-[6px]">MIDI Ctrl</li>
          <li className="bg-[#97fbfb] pl-[6px]">External Instrument</li>
          <li className="pl-[6px]">Mixer</li>
        </ul>
        <div className="border-t border-[#888]">Only show adjusted envelopes</div>
      </div>
      <svg viewBox="0 0 10 14" className="absolute top-[15px] left-[36px] z-20 h-[14px] w-[10px]" aria-hidden="true">
        <path d="M1 1v10l2.300-2.200L5 13l2-.8-1.700-4H9z" fill="#fff" stroke="#333" strokeWidth=".8" />
      </svg>
    </div>
  );
}

const ORIGIN = 9;
const BAR = 138;
const NOTES: [number, number, number][] = [
  [10, 47, 65], [79, 82, 68], [148, 110, 127], [286, 47, 61], [355, 82, 33], [390, 89, 15], [407, 96, 12], [425, 110, 131],
];

function NoteEditor() {
  const beats = Array.from({ length: 20 }, (_, i) => Math.round(ORIGIN + (i * BAR) / 4 + i * 0.06));
  const sixteenths = Array.from({ length: 77 }, (_, i) => ORIGIN + (i * BAR) / 16 + 0.5);
  return (
    <div className="relative min-w-0 flex-1 overflow-hidden bg-[#a0a0a0]">
      <svg className="block h-full w-full" role="img" aria-label="MIDI note editor">
        <rect width="100%" height="12" fill="#969696" />
        <rect y="12" width="100%" height="15" fill="#ababab" />
        <rect x="10" y="12" width="553" height="7" fill="#b6b2b9" />
        <rect x="10" y="20" width="553" height="7" fill="#b3b0b5" />
        <path d="M10 12.500h553M10 19.500h553" stroke="#4a4a52" />
        <rect y="27" width="100%" height="8" fill="#888" />
        <rect y="26" width="100%" height="1" fill="#66746c" />
        <rect y="35" width="100%" height="4" fill="#7d6868" />
        <rect y="39" width="9" height="86" fill="#b4b4b4" />
        <rect x="10" y="39" width="138" height="86" fill="#c6c6c6" />
        <rect x="148" y="39" width="138" height="86" fill="#d4d4d4" />
        <rect x="286" y="39" width="139" height="86" fill="#c6c6c6" />
        <rect x="425" y="39" width="138" height="86" fill="#d4d4d4" />
        <g stroke="#000" strokeOpacity=".07">
          {sixteenths.map((x) => (
            <path key={x} d={`M${x} 39v86`} />
          ))}
        </g>
        <g stroke="#000" strokeOpacity=".14">
          {beats.map((x) => (
            <path key={x} d={`M${x}.5 27v98`} />
          ))}
        </g>
        <line x1="0" y1="39.500" x2="100%" y2="39.500" stroke="#c08080" strokeDasharray="2 1.500" />
        <path d="M110 35h5l-2.500 3z" fill="#e09040" />
        <path d="M9.500 9v116M562.500 12v113" stroke="#4c4c4c" fill="none" />
        <path d="M10 13l6 3-6 3M10 20.500l6 3-6 3M562 13l-6 3 6 3M562 20.500l-6 3 6 3" fill="none" stroke="#555" strokeWidth=".9" />
        {NOTES.map(([x, y, w]) => (
          <rect key={`${x}-${y}`} x={x} y={y} width={w} height="6" fill="#2a2d3a" />
        ))}
        <g fontSize="7" fill="#2a2a2a">
          {beats.map((x, i) => {
            const bar = Math.floor(i / 4) + 1;
            const beat = (i % 4) + 1;
            return (
              <g key={x}>
                <path d={`M${x}.5 8v4`} stroke="#444" />
                {i < 19 && (
                  <text x={x + 4} y="11">{beat === 1 ? bar : `${bar}.${beat}`}</text>
                )}
              </g>
            );
          })}
        </g>
      </svg>
      <div className="absolute right-[2px] bottom-0 font-['DejaVu_Sans',sans-serif] text-[12px] leading-[14px] text-[#555]">1/16</div>
    </div>
  );
}

function DetailRow() {
  return (
    <div className="mt-[7px] flex h-[132px] shrink-0">
      <section aria-label="Info view" className="flex w-[132px] flex-col rounded-[4px] bg-[#6e6e6e] p-[2px]">
        <h2 className={`mt-px h-[11px] bg-[#cfcecd] pl-1 text-[8px] leading-[11px] italic ${BOLD}`}>Clip View</h2>
        <div className={`flex-1 bg-[#ababab] pt-[2px] pl-1 text-[7px] leading-[10px] whitespace-pre text-[#222] ${BOLD}`}>
          {"The Clip View displays the properties\nof selected clips. The selectors below\nthe Clip box at its far left show or hide\nthe available property boxes.\n\nThe Clip View can be resized by\ndragging its upper border.\n\n[Shift + Tab] Toggle Clip/Device View\n[Ctrl + Alt + L] Show/Hide Detail View"}
        </div>
      </section>
      <section aria-label="Clip view" className="ml-[6px] flex min-w-0 flex-1 gap-[4px] rounded-t-[4px] rounded-bl-[4px] bg-[#646464] pt-1 pr-[5px] pb-[3px] pl-[5px]">
        <ClipBox />
        <NotesBox />
        <EnvelopeBox />
        <NoteEditor />
      </section>
    </div>
  );
}

function StatusRow() {
  return (
    <footer className="flex h-[23px] shrink-0 items-start">
      <button aria-label="Toggle info view" className="mt-[7px] h-[13px] w-[13px] rounded-full bg-[#6e6e6e]">
        <svg viewBox="0 0 13 13" className="h-[13px] w-[13px]">
          <path d="M6.500 3L10 9H3z" fill="#989898" />
        </svg>
      </button>
      <div className="mt-[6px] ml-1 h-[15px] flex-1 rounded-[3px] bg-[#6e6e6e] p-[2px]">
        <div className="h-[11px] bg-[#ababab]" />
      </div>
      <div className="ml-[6px] h-[23px] w-[138px] bg-[#646464] px-[3px] pt-[7px]">
        <svg viewBox="0 0 132 13" className="h-[13px] w-[132px]" role="img" aria-label="Clip overview">
          <rect width="132" height="13" fill="#000" />
          <rect x="1" y="1" width="109" height="11" fill="#d4d4d4" />
          <rect x="110" y="1" width="20" height="11" fill="#6e6e6e" />
          <path d="M2 3h13M57 3h12" stroke="#111" />
          <path d="M16 7h13M71 7h5M76 8h3M79 9.500h4" stroke="#222" strokeWidth=".8" />
          <path d="M29 10.500h25M84 10.500h26" stroke="#999" />
          <path d="M22.500 2v10" stroke="#e08a3c" strokeWidth=".8" />
        </svg>
      </div>
      <button className={`mt-[7px] ml-[6px] flex h-[14px] w-[83px] items-center justify-end gap-[3px] rounded-[3px] bg-[#6e6e6e] pr-[2px] text-[7px] whitespace-nowrap text-[#1c1c1c] ${BOLD}`}>
        1-External Instrument
        <svg viewBox="0 0 8 11" className="h-[11px] w-2 shrink-0">
          <path d="M0 0h8v11H0z" fill="#a5aaaa" />
          <path d="M1 1.500h6v1.500H1z" fill="#7fd0cb" />
          <path d="M1 5h6M1 7h6M1 9h6" stroke="#858585" />
        </svg>
      </button>
      <button aria-label="Toggle detail view" className="mt-[7px] ml-[6px] h-[13px] w-[13px] rounded-full bg-[#6e6e6e]">
        <svg viewBox="0 0 13 13" className="h-[13px] w-[13px]">
          <path d="M6.500 3L10 9H3z" fill="#989898" />
        </svg>
      </button>
    </footer>
  );
}

/* ---------- lessons ---------- */

function LessonButton({ children }: { children: ReactNode }) {
  return (
    <button className="block h-[26px] w-full bg-[#656565] pl-2 text-left font-['Lato',sans-serif] text-[12px] leading-[26px] font-bold whitespace-nowrap text-[#f2f2f2]">
      {children}
    </button>
  );
}

function Lines({ lead, items }: { lead?: string; items: string[] }) {
  return (
    <>
      {items.map((line, i) => (
        <span key={line} className="block h-[11px]">
          {i === 0 && lead && <b className={BOLD}>{lead}</b>}
          {line}
        </span>
      ))}
    </>
  );
}

function Lessons() {
  const dot = "flex h-[9px] w-[9px] items-center justify-center rounded-full border border-[#555]";
  return (
    <aside aria-label="Lessons" className="ml-[5px] flex w-[195px] shrink-0 flex-col rounded-[4px] bg-[#6e6e6e] pt-[3px] pl-[3px]">
      <div className={`mr-[13px] flex h-[11px] items-center gap-[3px] bg-[#cfcecd] px-[2px] text-[8px] leading-[11px] italic ${BOLD}`}>
        <button aria-label="Close" className={dot}>
          <svg viewBox="0 0 7 7" className="h-[7px] w-[7px]">
            <path d="M1.500 1.500l4 4M5.500 1.500l-4 4" stroke="#333" />
          </svg>
        </button>
        <span className="flex-1">Live 9 Lessons</span>
        <button aria-label="Back" className={dot}>
          <svg viewBox="0 0 7 7" className="h-[7px] w-[7px]">
            <path d="M5.500 3.500h-4M3 2L1.500 3.500 3 5" fill="none" stroke="#999" />
          </svg>
        </button>
        <button aria-label="Forward" className={dot}>
          <svg viewBox="0 0 7 7" className="h-[7px] w-[7px]">
            <path d="M1.500 3.500h4M4 2l1.500 1.500L4 5" fill="none" stroke="#999" />
          </svg>
        </button>
        <button aria-label="Home" className={dot}>
          <svg viewBox="0 0 7 7" className="h-[7px] w-[7px]">
            <path d="M.5 3.500l3-2.500 3 2.500M1.500 3v3h4V3" fill="none" stroke="#333" strokeWidth=".9" />
          </svg>
        </button>
      </div>
      <div className="mt-[3px] mb-6 flex min-h-0 flex-1">
        <div className="flex-1 bg-[#ababab] px-[3px] pt-[2px] text-[8px] leading-[11px] whitespace-pre text-[#242424]">
          <p className={BOLD}>Welcome to Ableton Live!</p>
          <p className="mt-3">
            <Lines items={["Live comes with a collection of lessons that can", "help you learn to use the program."]} />
          </p>
          <p className="mt-3">
            <Lines lead="What's New in Live 9" items={[" - Learn about new", "features and improvements in Live 9."]} />
          </p>
          <div className="mt-[2px]">
            <LessonButton>What’s New in Live 9</LessonButton>
          </div>
          <p className="mt-[14px]">
            <Lines
              lead="Get Started"
              items={[" - To launch one of Live's", "introductory Lessons, click any of the buttons", "below."]}
            />
          </p>
          <div className="mt-[2px] flex flex-col gap-[15px]">
            <LessonButton>A Tour of Live</LessonButton>
            <LessonButton>Recording Audio</LessonButton>
            <LessonButton>Creating Beats</LessonButton>
            <LessonButton>Playing Software Instruments</LessonButton>
          </div>
          <p className="mt-[13px]">
            <Lines lead="Packs" items={[" - To view information about all of your", "installed Packs, click the button below."]} />
          </p>
          <div className="mt-[2px]">
            <LessonButton>Packs</LessonButton>
          </div>
          <p className="mt-[13px]">
            <Lines lead="Setup" items={[" - To get help setting up your audio or MIDI", "hardware, click one of the buttons below."]} />
          </p>
          <div className="mt-[2px] flex flex-col gap-[15px]">
            <LessonButton>Audio I/O</LessonButton>
            <LessonButton>MIDI Controllers</LessonButton>
          </div>
          <hr className="mt-[14px] border-[#777]" />
          <p className="mt-[2px]">
            <Lines items={["To learn even more about Live, consult the"]} />
            <a href="#manual" className="underline">Ableton Reference Manual</a>.
          </p>
          <p className="mt-3">
            Show <a href="#all" className="underline">all built-in lessons</a>.
          </p>
          <p className="mt-3">
            Get help navigating <a href="#lessons" className="underline">the lessons</a>.
          </p>
        </div>
        <div className="flex w-[13px] flex-col items-center py-[2px]">
          <svg viewBox="0 0 6 6" className="h-[6px] w-[6px]">
            <path d="M3 0l3 6H0z" fill="#4a4a4a" />
          </svg>
          <div className="my-px w-[6px] flex-1 bg-[#47484b]" />
          <svg viewBox="0 0 6 6" className="h-[6px] w-[6px]">
            <path d="M3 6l3-6H0z" fill="#4a4a4a" />
          </svg>
        </div>
      </div>
    </aside>
  );
}

/* ---------- enlarged envelope panel ---------- */

function BigTriple() {
  return (
    <div className="grid grid-cols-[26px_15px_15px] gap-[2px]">
      <div className="h-[13px] border border-[#666]" />
      <div className="h-[13px] border border-[#666]" />
      <div className="h-[13px] border border-[#666]" />
    </div>
  );
}

function BigChoice({ label, value, focused = false }: { label: string; value: string; focused?: boolean }) {
  return (
    <div className="relative h-[14px]">
      <select
        aria-label={label}
        className={`block h-[14px] w-full appearance-none overflow-hidden bg-[#dcdbda] py-0 text-[10px] leading-[10px] ${
          focused ? "border-2 border-[#222] pl-[9px]" : "border border-[#666] pl-[10px]"
        }`}
      >
        <option>{value}</option>
      </select>
      <span className="absolute top-[5px] left-[3px] h-[5px] w-[5px] bg-[#d8202c]" />
      <span className="pointer-events-none absolute top-[2px] right-[2px] flex h-[10px] w-2 items-center justify-end bg-[#dcdbda]">
        <Tri />
      </span>
    </div>
  );
}

function BigEnvelopes() {
  return (
    <section
      aria-label="Envelopes"
      className="absolute top-1/2 left-1/2 flex h-[196px] w-[144px] -translate-x-1/2 -translate-y-1/2 flex-col bg-[#6a6a6a] pt-[3px] pr-[5px] pb-[6px] pl-[2px]"
    >
      <h2 className={`flex h-[18px] items-center justify-between bg-[#b9417d] pr-[5px] pl-[2px] text-[12px] italic text-[#1c0a14] ${BOLD}`}>
        Envelopes
        <svg viewBox="0 0 14 14" className="h-[14px] w-[14px]">
          <circle cx="7" cy="7" r="6.200" fill="#fbd21d" stroke="#333" strokeWidth=".9" />
          <path d="M3.500 7h4" stroke="#111" strokeWidth="1.600" />
          <path d="M6.700 3.800L10.500 7l-3.800 3.200z" fill="#111" />
        </svg>
      </h2>
      <div className="flex flex-1 bg-[#ababab] px-[3px] pt-[3px] pb-[5px] text-[10px] leading-[12px] text-[#333]">
        <div className="flex w-[58px] flex-col">
          <BigChoice label="Envelope device" value="MIDI Ctrl" />
          <div className="h-[3px]" />
          <BigChoice label="Envelope control" value="1 - Modul" focused />
          <span className="mt-auto mb-1">Loop</span>
          <button className="h-[13px] border border-[#8a6d10] bg-[#fbd21d] leading-[11px]">Linked</button>
        </div>
        <div className="ml-1 w-[2px] bg-[#777]" />
        <div className="ml-1 flex flex-1 flex-col justify-between">
          <div className="flex flex-col gap-[4px]">
            <span>Start</span>
            <BigTriple />
          </div>
          <div className="flex flex-col gap-[4px]">
            <span>End</span>
            <BigTriple />
          </div>
          <div className="h-[2px] w-[60px] bg-[#777]" />
          <button className="h-[13px] w-[60px] border border-[#666] leading-[11px] text-[#777]">Loop</button>
          <div className="flex flex-col gap-[4px]">
            <span>Position</span>
            <BigTriple />
          </div>
          <div className="flex flex-col gap-[4px]">
            <span>Length</span>
            <BigTriple />
          </div>
        </div>
      </div>
    </section>
  );
}

export default function App() {
  return (
    <div className="relative flex min-h-screen w-full flex-col bg-black pt-7 pb-[29px] font-['Liberation_Sans',Arial,sans-serif] text-[#1c1c1c]">
      <div className="flex flex-1 flex-col border-t border-[#555] bg-[#929292]">
        <TopBar />
        <div className="flex min-h-0 flex-1 pr-[5px] pb-[3px]">
          <main className="flex min-w-0 flex-1 flex-col pl-[6px]">
            <div className="flex min-h-[474px] flex-1 gap-[7px]">
              <Browser />
              <Session />
            </div>
            <DetailRow />
            <StatusRow />
          </main>
          <Lessons />
        </div>
      </div>
      <BigEnvelopes />
    </div>
  );
}
